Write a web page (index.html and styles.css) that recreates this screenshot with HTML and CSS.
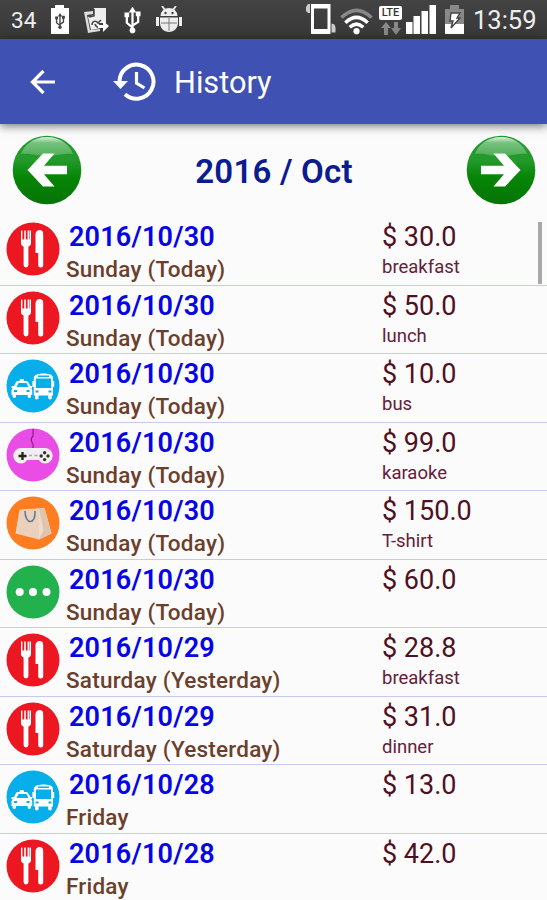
FILE: index.html
```html
<!DOCTYPE html>
<html lang="en">
<head>
<meta charset="utf-8">
<title>History</title>
<link rel="stylesheet" href="styles.css">
</head>
<body>
<svg class="defs" width="0" height="0" aria-hidden="true">
  <defs>
    <linearGradient id="green" x1="0" y1="0" x2="0" y2="1">
      <stop offset="0" stop-color="#1b9a2c"/><stop offset=".35" stop-color="#259a2c"/><stop offset=".6" stop-color="#068606"/><stop offset="1" stop-color="#077307"/>
    </linearGradient>
    <linearGradient id="gloss" x1="0" y1="0" x2="0" y2="1">
      <stop offset="0" stop-color="#fff" stop-opacity=".85"/><stop offset=".3" stop-color="#fff" stop-opacity=".4"/><stop offset="1" stop-color="#fff" stop-opacity=".2"/>
    </linearGradient>
    <symbol id="usb" viewBox="0 0 18 28">
      <g fill="none" stroke="currentColor" stroke-width="2.400"><path d="M9 25V5M9 22L3 17V9M9 20l6-4V8"/></g>
      <path fill="currentColor" d="M9 0l4 6H5zM.5 6h5v5h-5zM12.500 5h5v5h-5z"/><circle fill="currentColor" cx="9" cy="25" r="3"/>
    </symbol>
    <symbol id="food" viewBox="0 0 54 54">
      <circle cx="27" cy="27" r="26.500" fill="#ed1722"/>
      <path fill="#fff" d="M15 8.500h1.400v9h1.800v-9h1.600v9h1.800v-9h1.800v9h.5v-9h1.100v12.500c0 1.800-1 3-2.600 3.500V43a2.400 2.400 0 0 1-4.800 0V24.500c-1.600-.5-2.600-1.700-2.600-3.500z"/>
      <path fill="#fff" d="M29.500 13c0-3.600 2-5 4.200-5s3.500 1.500 3.500 4v31a2.500 2.500 0 0 1-5 0V31h-2.700z"/>
    </symbol>
    <symbol id="transport" viewBox="0 0 54 54">
      <circle cx="27" cy="27" r="26.500" fill="#08aeea"/>
      <path transform="translate(-3.500 0)" fill="#fff" fill-rule="evenodd" d="M33 16c4-2 12-2 16 0l1.500 2v4h1.200v6h-1.200v8.500h-1.300v3q-1.500 2-3.500 0v-3H36v3q-2 2-3.500 0v-3h-1.200V28h-1.400v-6h1.400v-4zM35.500 16.400v1.600h11v-1.600zM33.400 19.500V29h15.300V19.500zM33 31.500v2h3v-2zM46 31.500v2h3v-2z"/>
      <path fill="#fff" fill-rule="evenodd" d="M8 27l2-4q.5-1 2-1h1.500l.5-2h3.500l.5 2h2q1.500 0 2 1l2.500 4H26v2h-.7l.9 2v5h-1.300v2q-1.500 2-3.200 0v-2H10v2q-1.700 2-3.400 0v-2H5.500v-5l1.200-2H5.500v-2zM10.500 28h12l-2-4h-8zM8 31v2h3v-2zM20.500 31v2h3v-2z"/>
    </symbol>
    <symbol id="game" viewBox="0 0 54 54">
      <circle cx="27" cy="27" r="26.500" fill="#e94de5"/>
      <path d="M27 1v7c-2.500 2.500-1.500 6 0 8v4" fill="none" stroke="#80247f" stroke-width="1.200"/>
      <path fill="#f2eef0" d="M15 20h24a7.700 7.700 0 0 1 0 15.400c-3 0-5-1.400-6-3.400H21c-1 2-3 3.400-6 3.400A7.700 7.700 0 0 1 15 20z"/>
      <path stroke="#222" stroke-width="2.300" d="M12.500 28h8M16.500 24v8"/><path stroke="#aaa" stroke-width="1.400" d="M23 27.500h3M28.500 27.500h3"/>
      <g fill="#333"><circle cx="35.200" cy="28" r="1.700"/><circle cx="42" cy="28" r="1.700"/><circle cx="38.600" cy="24.800" r="1.700"/><circle cx="38.600" cy="31.600" r="1.700"/></g>
    </symbol>
    <symbol id="bag" viewBox="0 0 54 54">
      <circle cx="27" cy="27" r="26.500" fill="#fe7d21"/>
      <path fill="#ead1bd" d="M13.500 13.500l25-1.500 7 25.500-12.500 6-23.500-6z"/>
      <path fill="#dfc4ae" d="M33 12.300l5.500-.3 7 25.500-12.500 6z"/><path fill="#f0dac8" d="M33 12.300l4.500 22L33 43.500z"/>
      <path d="M19 15c0 14 11 14 10 0" fill="none" stroke="#5b7793" stroke-width="1.500"/>
    </symbol>
    <symbol id="other" viewBox="0 0 54 54">
      <circle cx="27" cy="27" r="26.500" fill="#22b14c"/>
      <g fill="#fff"><circle cx="13.700" cy="27" r="4"/><circle cx="27" cy="27" r="4"/><circle cx="40.500" cy="27" r="4"/></g>
    </symbol>
    <symbol id="round-arrow" viewBox="0 0 70 70">
      <circle cx="35" cy="35" r="34.300" fill="url(#green)"/>
      <path fill="url(#gloss)" d="M35 2c14 0 23 8 26 17-10-1-14 2-26 2S18 18 9 19C12 10 21 2 35 2z"/>
      <path fill="#fff" d="M15.500 35L31 18.500h11.500L32 30.700H55V39.300H32L42.500 51.500H31z"/>
    </symbol>
  </defs>
</svg>

<div class="status">
  <span class="percent">34</span>
  <svg class="battery-usb" width="20" height="29" viewBox="0 0 20 29"><path fill="#fff" d="M5 0h9v3h5v26H1V3h4z"/><use href="#usb" x="4.500" y="8" width="11" height="16" color="#444"/></svg>
  <svg class="transfer" width="27" height="27" viewBox="0 0 27 27"><path fill="#ddd" d="M1 5l9-1v3L4 8l3 15 10-1v2L5 26z"/><path fill="#eee" d="M11 1h12v15H11zM5 10l6-2 7 13-10 2z"/><path fill="none" stroke="#444" stroke-width="1.500" d="M11 2v7l-5 1M9 18c0-4 4-5 6-2l3-3M12 17c1 4 5 4 7 3"/><path fill="#fff" d="M15 18h5v-4l6 5-6 6v-4h-5z"/></svg>
  <svg class="usb" width="17" height="28"><use href="#usb"/></svg>
  <svg class="robot" width="28" height="27" viewBox="0 0 28 27"><path stroke="#eee" stroke-width="1.800" d="M7 0l3 4M21 0l-3 4"/><path fill="#eee" d="M5.500 10a8.500 8 0 0 1 17 0zM5 11.500h18V17c0 5-4 9-9 9s-9-4-9-9zM1 11h3v9H1zM24 11h3v9h-3z"/><path stroke="#777" d="M14 12v13M6 17h16"/><circle cx="10.500" cy="7" r="1.200" fill="#444"/><circle cx="17.500" cy="7" r="1.200" fill="#444"/></svg>
  <span class="spacer"></span>
  <svg class="vibrate" width="32" height="32" viewBox="0 0 32 32"><path fill="#fff" fill-rule="evenodd" d="M6 1h19.500v30H6zM9 5.500v20.500h13.500V5.500z"/><path fill="#ccc" d="M5 1v9H3L1 8V4l2-3zM26.500 20.500l3 1 1 3v5h-4z"/></svg>
  <svg class="wifi" width="33" height="27" viewBox="0 0 34 27"><g fill="none" stroke="#fff" stroke-width="3.600"><path stroke="#888" d="M1.500 9.500q15.500-15 31 0"/><path d="M5.500 14.700q11.500-11 23 0M10 19.500q7-6.500 14 0"/></g><circle cx="17" cy="23.500" r="3.200" fill="#fff"/></svg>
  <div class="network"><span class="lte">LTE</span><svg width="20" height="13" viewBox="0 0 20 13"><path fill="#888" d="M5 0l5 6H7v7H3V6H0zM13 0h4v6h3l-5 7-5-7h3z"/></svg></div>
  <svg class="signal" width="30" height="31" viewBox="0 0 30 31"><path fill="#fff" d="M0 18h6.500v12H0zM7.500 12H14v18H7.500zM15.500 7H22v23h-6.500zM23.500 1H30v29h-6.500z"/></svg>
  <svg class="battery" width="19" height="30" viewBox="0 0 19 30"><path fill="#888" d="M5 0h9v4h5v25H0V4h5z"/><path fill="#fff" d="M0 19h19v10H0z"/><path fill="#fff" stroke="#444" stroke-width="1.400" d="M6 8h9l-3 5h3l-9 10 2-7H5z"/></svg>
  <span class="clock">13:59</span>
</div>

<header class="appbar">
  <svg class="back" width="26" height="26" viewBox="0 0 26 26"><path fill="none" stroke="#fff" stroke-width="3.200" d="M25 13H3M13.500 2L2.500 13l11 11"/></svg>
  <svg class="clock-icon" width="43" height="39" viewBox="0 0 43 39"><path fill="none" stroke="#fff" stroke-width="4" d="M6.500 19.500A17 17 0 1 1 12 32.200"/><path fill="#fff" d="M0 19h15l-7.500 8z"/><path fill="none" stroke="#fff" stroke-width="3.200" d="M23.500 10v11l8 5"/></svg>
  <h1>History</h1>
</header>

<section class="month">
  <svg class="prev" width="70" height="70"><use href="#round-arrow"/></svg>
  <h2>2016 / Oct</h2>
  <svg class="next" width="70" height="70" viewBox="0 0 70 70"><use href="#round-arrow" transform="matrix(-1 0 0 1 70 0)" width="70" height="70"/></svg>
</section>

<main class="list">
  <div class="row"><svg class="icon"><use href="#food"/></svg><div class="when"><b>2016/10/30</b><span>Sunday (Today)</span></div><div class="cost"><span>$ 30.0</span><small>breakfast</small></div></div>
  <div class="row"><svg class="icon"><use href="#food"/></svg><div class="when"><b>2016/10/30</b><span>Sunday (Today)</span></div><div class="cost"><span>$ 50.0</span><small>lunch</small></div></div>
  <div class="row"><svg class="icon"><use href="#transport"/></svg><div class="when"><b>2016/10/30</b><span>Sunday (Today)</span></div><div class="cost"><span>$ 10.0</span><small>bus</small></div></div>
  <div class="row"><svg class="icon"><use href="#game"/></svg><div class="when"><b>2016/10/30</b><span>Sunday (Today)</span></div><div class="cost"><span>$ 99.0</span><small>karaoke</small></div></div>
  <div class="row"><svg class="icon"><use href="#bag"/></svg><div class="when"><b>2016/10/30</b><span>Sunday (Today)</span></div><div class="cost"><span>$ 150.0</span><small>T-shirt</small></div></div>
  <div class="row"><svg class="icon"><use href="#other"/></svg><div class="when"><b>2016/10/30</b><span>Sunday (Today)</span></div><div class="cost"><span>$ 60.0</span></div></div>
  <div class="row"><svg class="icon"><use href="#food"/></svg><div class="when"><b>2016/10/29</b><span>Saturday (Yesterday)</span></div><div class="cost"><span>$ 28.8</span><small>breakfast</small></div></div>
  <div class="row"><svg class="icon"><use href="#food"/></svg><div class="when"><b>2016/10/29</b><span>Saturday (Yesterday)</span></div><div class="cost"><span>$ 31.0</span><small>dinner</small></div></div>
  <div class="row"><svg class="icon"><use href="#transport"/></svg><div class="when"><b>2016/10/28</b><span>Friday</span></div><div class="cost"><span>$ 13.0</span></div></div>
  <div class="row"><svg class="icon"><use href="#food"/></svg><div class="when"><b>2016/10/28</b><span>Friday</span></div><div class="cost"><span>$ 42.0</span></div></div>
  <div class="scrollbar"></div>
</main>
</body>
</html>
```
FILE: styles.css
```css
* { box-sizing: border-box; }
body {
  margin: 0;
  height: 900px;
  overflow: hidden;
  background: #fbfbfb;
  font-family: Roboto, "Liberation Sans", sans-serif;
}
svg { display: block; flex: none; }
.defs { position: absolute; }

.status {
  display: flex;
  align-items: flex-start;
  height: 39px;
  padding: 0 10px 0 11px;
  background: linear-gradient(#434343, #383838);
  color: #eee;
}
.percent { width: 39px; font-size: 22.5px; line-height: 40px; }
.battery-usb { margin-top: 5px; }
.transfer { margin: 7px 0 0 13px; }
.usb { margin: 6px 0 0 14px; color: #fff; }
.robot { margin: 6px 0 0 14px; }
.spacer { flex: 1; }
.vibrate { margin: 3px 3px 0 0; }
.wifi { margin: 8px 6px 0 0; }
.network {
  display: flex;
  flex-direction: column;
  align-items: center;
  gap: 2px;
  width: 23px;
  margin: 6px 4px 0 0;
}
.lte {
  width: 23px;
  height: 14px;
  border-radius: 2px;
  background: #fff;
  color: #333;
  font-size: 11px;
  font-weight: 500;
  line-height: 14px;
  text-align: center;
}
.signal { margin: 4px 9px 0 0; }
.battery { margin: 5px 9px 0 0; }
.clock { width: 64px; font-size: 25.5px; line-height: 41px; white-space: nowrap; }

.appbar {
  position: relative;
  display: flex;
  align-items: center;
  height: 85px;
  padding-left: 30px;
  background: #3f51b3;
  box-shadow: 0 2px 9px rgba(0, 0, 0, .55);
  color: #fff;
}
.clock-icon { margin-left: 57px; }
.appbar h1 { margin: 2px 0 0 18px; font-size: 30.7px; font-weight: 400; }

.month {
  display: flex;
  align-items: center;
  justify-content: space-between;
  height: 93px;
  padding: 0 11px 1px 12px;
}
.month h2 { margin: 3px 0 0; color: #0b1b90; font-size: 33px; font-weight: 600; letter-spacing: .2px; }

.list { position: relative; }
.row {
  display: flex;
  height: 68.5px;
  border-bottom: 1.5px solid #c9c9ec;
}
.icon { width: 54px; height: 54px; margin: 5px 6px 0; }
.when { width: 316px; }
.when b {
  display: block;
  margin-top: 4px;
  padding-left: 3px;
  color: #0505e6;
  font-size: 27px;
  font-weight: 600;
  letter-spacing: .2px;
  line-height: 32px;
}
.when span {
  display: block;
  margin-top: 1px;
  color: #6b3f2b;
  font-size: 22.5px;
  font-weight: 500;
  letter-spacing: .22px;
  line-height: 31px;
}
.cost span { display: block; margin-top: 4px; color: #4f1022; font-size: 27px; line-height: 32px; }
.cost small { display: block; color: #642038; font-size: 18.5px; line-height: 28px; }
.scrollbar { position: absolute; top: 5px; right: 5px; width: 4px; height: 62px; background: #a8a8a8; }
```
